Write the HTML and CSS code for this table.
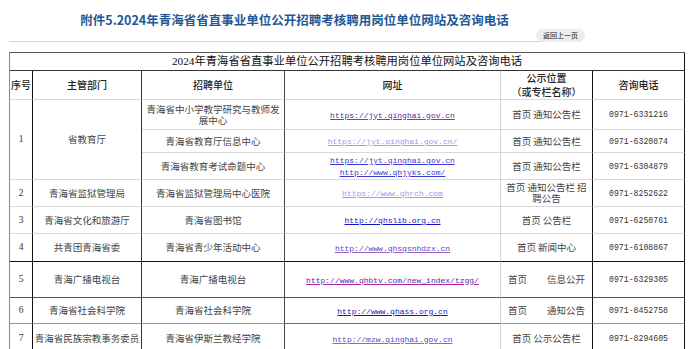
FILE: index.html
```html
<!DOCTYPE html>
<html lang="zh-CN">
<head>
    <meta charset="UTF-8">
    <meta name="viewport" content="width=device-width, initial-scale=1.0">
    <title>附件5.2024年青海省省直事业单位公开招聘考核聘用岗位单位网站及咨询电话</title>
    <link rel="stylesheet" href="styles.css">
</head>
<body>

<div class="top">
    <h1>附件5.2024年青海省省直事业单位公开招聘考核聘用岗位单位网站及咨询电话</h1>
    <div class="tools">
        <a class="back" href="#">返回上一页</a>
    </div>
</div>

<table class="list">
    <colgroup>
        <col class="w1"><col class="w2"><col class="w3"><col class="w4"><col class="w5"><col class="w6">
    </colgroup>
    <tr class="cap">
        <td colspan="6">2024年青海省省直事业单位公开招聘考核聘用岗位单位网站及咨询电话</td>
    </tr>
    <tr class="head h29">
        <td class="k1">序号</td>
        <td class="k2">主管部门</td>
        <td class="k3">招聘单位</td>
        <td class="k4">网址</td>
        <td class="k5"><div>公示位置</div><div>（或专栏名称）</div></td>
        <td class="k6">咨询电话</td>
    </tr>
    <tr class="h30">
        <td class="k1 num" rowspan="3">1</td>
        <td class="k2" rowspan="3">省教育厅</td>
        <td class="k3">青海省中小学教学研究与教师发展中心</td>
        <td class="k4"><a class="u1" href="#">https://jyt.qinghai.gov.cn</a></td>
        <td class="k5">首页 通知公告栏</td>
        <td class="k6 tel">0971-6331216</td>
    </tr>
    <tr class="h23">
        <td class="k3">青海省教育厅信息中心</td>
        <td class="k4"><a class="u2" href="#">https://jyt.qinghai.gov.cn/</a></td>
        <td class="k5">首页 通知公告栏</td>
        <td class="k6 tel">0971-6320874</td>
    </tr>
    <tr class="h27">
        <td class="k3">青海省教育考试命题中心</td>
        <td class="k4"><a class="u3" href="#">https://jyt.qinghai.gov.cn</a><br><a class="u3" href="#">http://www.qhjyks.com/</a></td>
        <td class="k5">首页 通知公告栏</td>
        <td class="k6 tel">0971-6304879</td>
    </tr>
    <tr class="h27">
        <td class="k1 num">2</td>
        <td class="k2">青海省监狱管理局</td>
        <td class="k3">青海省监狱管理局中心医院</td>
        <td class="k4"><a class="u2" href="#">https://www.qhrch.com</a></td>
        <td class="k5">首页 通知公告栏 招聘公告</td>
        <td class="k6 tel">0971-8252622</td>
    </tr>
    <tr class="h27">
        <td class="k1 num">3</td>
        <td class="k2">青海省文化和旅游厅</td>
        <td class="k3">青海省图书馆</td>
        <td class="k4"><a class="u4" href="#">http://qhslib.org.cn</a></td>
        <td class="k5">首页 公告栏</td>
        <td class="k6 tel">0971-6250761</td>
    </tr>
    <tr class="h28 end-dark">
        <td class="k1 num">4</td>
        <td class="k2">共青团青海省委</td>
        <td class="k3">青海省青少年活动中心</td>
        <td class="k4"><a class="u5" href="#">http://www.qhsqsnhdzx.cn</a></td>
        <td class="k5">首页 新闻中心</td>
        <td class="k6 tel">0971-6108867</td>
    </tr>
    <tr class="h36 end-grey">
        <td class="k1 num">5</td>
        <td class="k2">青海广播电视台</td>
        <td class="k3">青海广播电视台</td>
        <td class="k4"><a class="u1" href="#">http://www.qhbtv.com/new_index/tzgg/</a></td>
        <td class="k5">首页<span class="gap"></span>信息公开</td>
        <td class="k6 tel">0971-6329305</td>
    </tr>
    <tr class="h26 end-mid">
        <td class="k1 num">6</td>
        <td class="k2">青海省社会科学院</td>
        <td class="k3">青海省社会科学院</td>
        <td class="k4 blue-line"><a class="u4" href="#">http://www.qhass.org.cn</a></td>
        <td class="k5">首页<span class="gap"></span>通知公告</td>
        <td class="k6 tel">0971-8452758</td>
    </tr>
    <tr class="h30">
        <td class="k1 num">7</td>
        <td class="k2">青海省民族宗教事务委员</td>
        <td class="k3">青海省伊斯兰教经学院</td>
        <td class="k4"><a class="u5" href="#">http://mzw.qinghai.gov.cn</a></td>
        <td class="k5">首页 公示公告栏</td>
        <td class="k6 tel">0971-8294605</td>
    </tr>
</table>

</body>
</html>
```

FILE: styles.css
```css
body {
    margin: 0;
    background: #fff;
    font-family: "Noto Sans CJK SC", sans-serif;
    color: #444;
}
.top {
    width: 571px;
    height: 41px;
    margin-left: 9px;
    border-bottom: 1px solid #f6d592;
}
.top h1 {
    margin: 0;
    padding-top: 12px;
    font-size: 12.5px;
    line-height: 15px;
    font-weight: bold;
    color: #1f5996;
    text-align: center;
}
.tools {
    display: flex;
    justify-content: flex-end;
    margin-top: 2px;
    margin-right: -5px;
}
.back {
    display: block;
    height: 13px;
    padding: 0 7px;
    border-radius: 7px;
    background: #ececec;
    color: #222;
    font-size: 7px;
    line-height: 13px;
    text-decoration: none;
}
.list {
    margin: 10px 0 0 9px;
    width: 676px;
    table-layout: fixed;
    border-collapse: separate;
    border-spacing: 0;
    border-left: 1px solid #8a8a8a;
    border-top: 1px solid #5a5a5a;
}
.w1 { width: 23px; }
.w2 { width: 109px; }
.w3 { width: 143px; }
.w4 { width: 216px; }
.w5 { width: 92px; }
.w6 { width: 92px; }
.list td {
    padding: 0 1px;
    text-align: center;
    vertical-align: middle;
    font-size: 9.5px;
    line-height: 11px;
    border-right: 1px solid #d4d4d4;
    border-bottom: 1px solid #d9d9d9;
    overflow: hidden;
}
.list td.k5 { padding: 0 2px; }
.cap td {
    height: 17px;
    font-family: "Liberation Serif", "Noto Sans CJK SC", serif;
    font-size: 11.3px;
    color: #111;
    border-right: 1px solid #111;
    border-bottom: 1px solid #333;
}
.list .head td {
    font-size: 10px;
    line-height: 14px;
    font-weight: 500;
    color: #222;
}
.list td.k1 { border-right-color: #111; }
.list td.k2 { border-right-color: #333; }
.list td.k3 { border-right-color: #444; }
.list td.k4 { border-right-color: #d4d4d4; }
.list td.k5 { border-right-color: #111; }
.list td.k6 { border-right-color: #111; }
.h23 { height: 23px; }
.h26 { height: 26px; }
.h27 { height: 27px; }
.h28 { height: 28px; }
.h29 { height: 29px; }
.h30 { height: 30px; }
.h36 { height: 36px; }
.list .end-dark td { border-bottom-color: #111; }
.list .end-grey td { border-bottom-color: #555; }
.list .end-mid td { border-bottom-color: #9a9a9a; }
.list .end-mid td.blue-line { border-bottom-color: #5b5bf0; }
.num {
    font-family: "Liberation Serif", serif;
    color: #333;
}
.tel {
    font-family: "Liberation Mono", monospace;
    color: #333;
}
.list td.tel { font-size: 8.2px; }
.k4 a {
    font-family: "Liberation Mono", monospace;
    font-size: 8px;
}
.u1 { color: #5a2a9a; text-decoration-color: #b020b0; }
.u2 { color: #a298e6; }
.u3 { color: #3a3ad2; }
.u4 { color: #1414c4; }
.u5 { color: #5446c8; text-decoration-color: #a060c0; }
.gap {
    display: inline-block;
    width: 20px;
}
```
